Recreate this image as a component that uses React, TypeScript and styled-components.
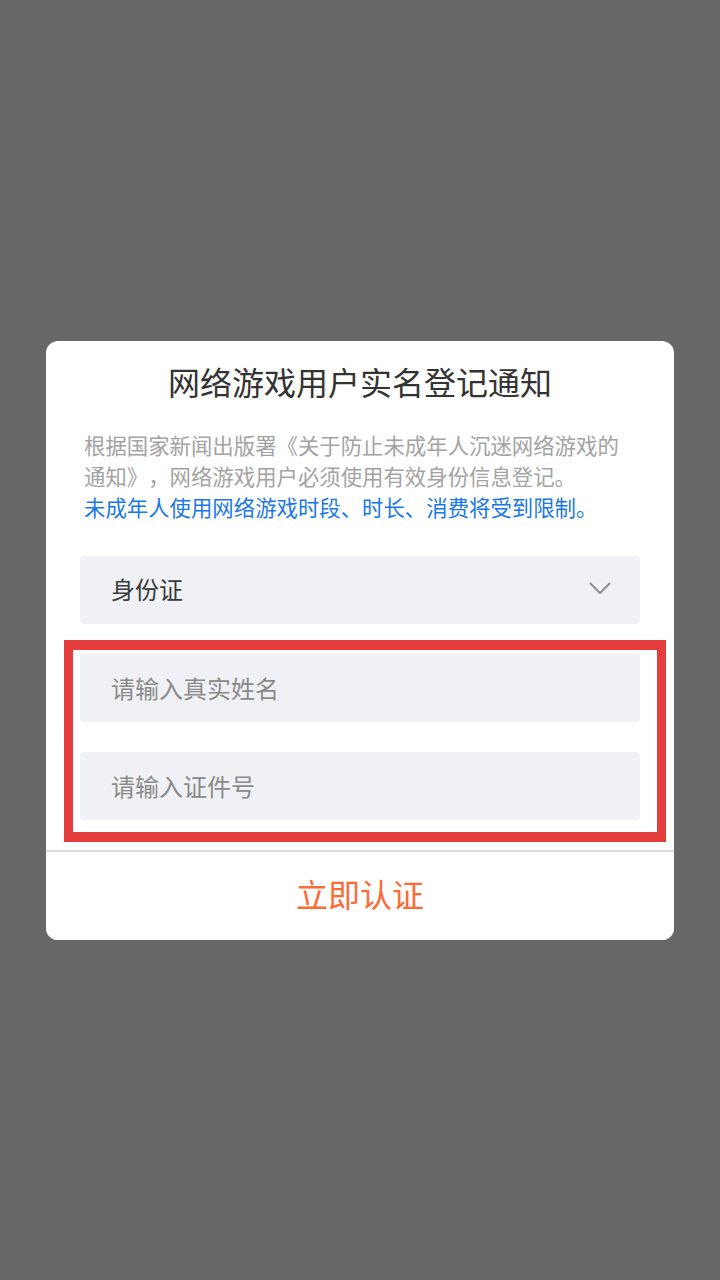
import { createGlobalStyle, styled } from "styled-components";

const GlobalStyle = createGlobalStyle`
    html, body {
        margin: 0;
        padding: 0;
    }
    body {
        font-family: "Noto Sans CJK SC", "Noto Sans", sans-serif;
        background: #676767;
    }
    * {
        box-sizing: border-box;
    }
`;

const Backdrop = styled.div`
    min-height: 1280px;
    display: flex;
    align-items: center;
    justify-content: center;
    background: #676767;
`;

const Dialog = styled.div`
    width: 628px;
    background: #ffffff;
    border-radius: 12px;
    overflow: hidden;
    display: flex;
    flex-direction: column;
    padding-top: 18px;
`;

const Title = styled.h1`
    margin: 0;
    font-size: 32px;
    line-height: 44px;
    font-weight: 400;
    color: #333333;
    text-align: center;
`;

const Notice = styled.div`
    margin-top: 26px;
    padding: 0 36px 0 38px;
    font-size: 21.4px;
    line-height: 31px;
    text-spacing-trim: space-all;
    font-feature-settings: "fwid" 1;
`;

const NoticeLine = styled.p<{ $accent?: boolean }>`
    margin: 0;
    color: ${(p) => (p.$accent ? "#1a78e6" : "#a3a3a3")};
`;

const Form = styled.div`
    margin-top: 34px;
    padding: 0 34px 30px;
    display: flex;
    flex-direction: column;
    gap: 30px;
`;

const Select = styled.div`
    height: 68px;
    display: flex;
    align-items: center;
    justify-content: space-between;
    padding: 0 29px 3px 31px;
    background: #f0f1f5;
    border-radius: 4px;
    font-size: 24px;
    color: #3a3a3a;
`;

const Chevron = styled.svg`
    width: 22px;
    height: 12px;
`;

const HighlightGroup = styled.div`
    position: relative;
    display: flex;
    flex-direction: column;
    gap: 30px;
`;

const Highlight = styled.div`
    position: absolute;
    top: -14px;
    bottom: -22px;
    left: -16px;
    right: -26px;
    border: 10px solid #e33d3d;
    border-left-width: 9px;
    border-right-width: 9px;
    pointer-events: none;
`;

const Field = styled.input`
    height: 68px;
    width: 100%;
    border: none;
    outline: none;
    border-radius: 4px;
    background: #f0f1f5;
    padding: 0 31px;
    font-family: inherit;
    font-size: 24px;
    color: #333333;

    &::placeholder {
        color: #8a8a8a;
    }
`;

const Submit = styled.button`
    height: 90px;
    border: none;
    border-top: 2px solid #dddddd;
    background: #ffffff;
    padding: 0 0 5px;
    font-family: inherit;
    font-size: 32px;
    color: #fd6a36;
    cursor: pointer;
`;

const App = () => {
    return (
        <>
            <GlobalStyle />
            <Backdrop>
                <Dialog>
                    <Title>网络游戏用户实名登记通知</Title>
                    <Notice>
                        <NoticeLine>
                            根据国家新闻出版署《关于防止未成年人沉迷网络游戏的
                            <br />
                            通知》，网络游戏用户必须使用有效身份信息登记。
                        </NoticeLine>
                        <NoticeLine $accent>
                            未成年人使用网络游戏时段、时长、消费将受到限制。
                        </NoticeLine>
                    </Notice>
                    <Form>
                        <Select>
                            <span>身份证</span>
                            <Chevron viewBox="0 0 22 12" fill="none">
                                <path
                                    d="M1 1l10 10L21 1"
                                    stroke="#8e8e8e"
                                    strokeWidth="2"
                                />
                            </Chevron>
                        </Select>
                        <HighlightGroup>
                            <Field placeholder="请输入真实姓名" />
                            <Field placeholder="请输入证件号" />
                            <Highlight />
                        </HighlightGroup>
                    </Form>
                    <Submit>立即认证</Submit>
                </Dialog>
            </Backdrop>
        </>
    );
};

export default App;
